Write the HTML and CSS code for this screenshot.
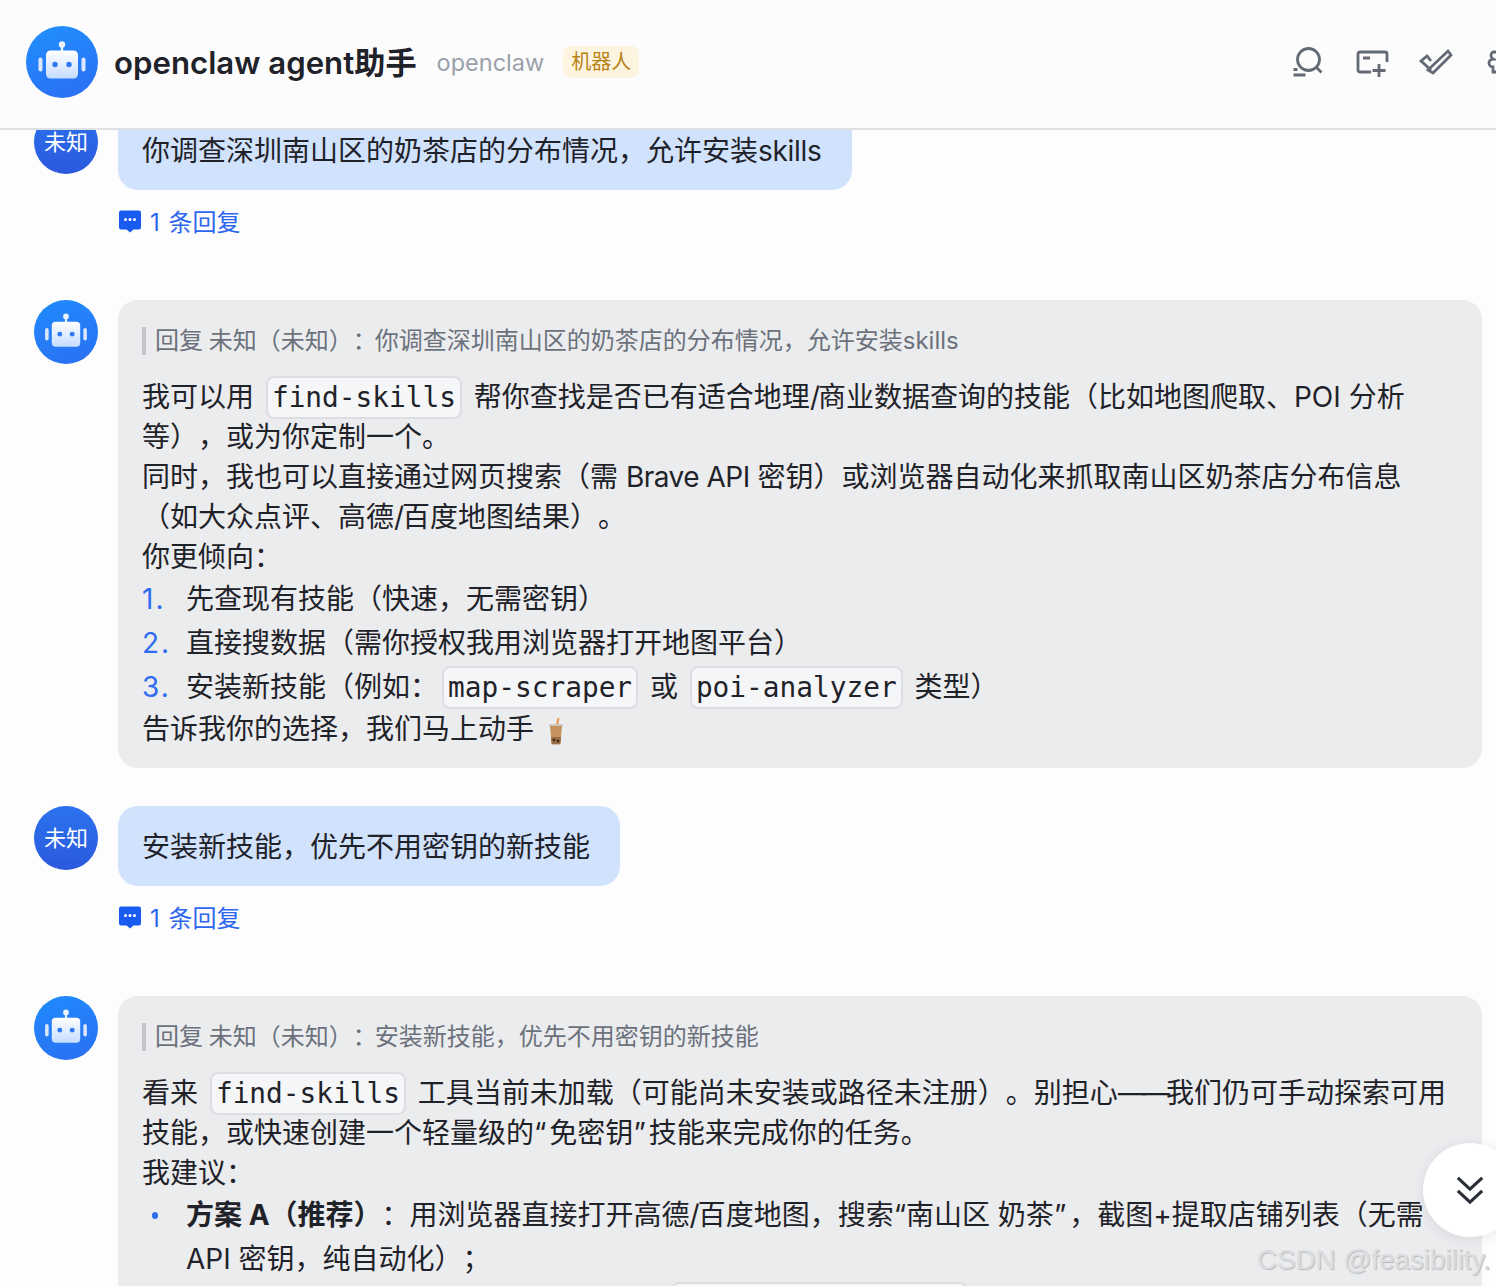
FILE: index.html
```html
<!DOCTYPE html>
<html lang="zh-CN">
<head>
<meta charset="utf-8">
<title>openclaw agent助手</title>
<link rel="stylesheet" href="styles.css">
</head>
<body>
<svg class="defs" width="0" height="0" aria-hidden="true">
  <defs>
    <linearGradient id="face" x1="0" y1="0" x2="0" y2="1"><stop offset="0" stop-color="#ffffff"/><stop offset="1" stop-color="#c5dcff"/></linearGradient>
    <symbol id="robot" viewBox="0 0 72 72">
      <circle cx="36" cy="18.500" r="3.200" fill="#eaf2ff"/>
      <rect x="34.800" y="19" width="2.400" height="6" fill="#eaf2ff"/>
      <rect x="20" y="24.500" width="32" height="28" rx="4.500" fill="url(#face)"/>
      <rect x="12.500" y="31.500" width="4" height="14" rx="2" fill="#dbe8ff"/>
      <rect x="55.500" y="31.500" width="4" height="14" rx="2" fill="#dbe8ff"/>
      <circle cx="29" cy="38.500" r="2.700" fill="#2f78f5"/>
      <circle cx="43" cy="38.500" r="2.700" fill="#2f78f5"/>
    </symbol>
    <symbol id="thread" viewBox="0 0 24 24">
      <path d="M3 1.500h18a2 2 0 0 1 2 2v15a2 2 0 0 1-2 2h-5.500L12 23.500 8.500 20.500H3a2 2 0 0 1-2-2v-15a2 2 0 0 1 2-2z" fill="#1a5cf0"/>
      <circle cx="7.500" cy="10.500" r="1.500" fill="#fff"/><circle cx="12" cy="10.500" r="1.500" fill="#fff"/><circle cx="16.500" cy="10.500" r="1.500" fill="#fff"/>
    </symbol>
  </defs>
</svg>

<header class="topbar">
  <div class="identity">
    <svg class="avatar-lg"><use href="#robot"/></svg>
    <h1 class="title">openclaw agent助手</h1>
    <span class="handle">openclaw</span>
    <span class="tag">机器人</span>
  </div>
  <div class="actions">
    <svg class="action" viewBox="0 0 36 36"><circle cx="19.500" cy="15.500" r="11"/><path d="M27.500 23.500l5 5M4.500 31h12M4.500 25.500h4"/></svg>
    <svg class="action" viewBox="0 0 36 36"><path d="M18 28H7a2 2 0 0 1-2-2V10a2 2 0 0 1 2-2h25a2 2 0 0 1 2 2v8M10 14h7M26 20v13M19.500 26.500h13"/></svg>
    <svg class="action" viewBox="0 0 36 36"><path d="M14 17l-4-5-6 5 10 9M11 26L31 7l3 4-18 18z"/></svg>
    <svg class="action" viewBox="0 0 36 36"><path d="M12 8h6a4 4 0 0 1 8 0h4v20H12v-5a4 4 0 0 1 0-8 4 4 0 0 1 0-7z"/></svg>
  </div>
</header>

<main class="feed">
  <article class="msg">
    <div class="avatar user">未知</div>
    <div class="col">
      <div class="bubble mine">你调查深圳南山区的奶茶店的分布情况，允许安装<span class="latin">skills</span></div>
      <a class="replies"><svg class="thread-ico"><use href="#thread"/></svg>1 条回复</a>
    </div>
  </article>

  <article class="msg">
    <svg class="avatar"><use href="#robot"/></svg>
    <div class="col wide">
      <div class="bubble bot">
        <div class="quote"><span class="who">回复 未知（未知）：</span>你调查深圳南山区的奶茶店的分布情况，允许安装skills</div>
        <p>我可以用 <code>find-skills</code> 帮你查找是否已有适合地理<span class="slash">/</span>商业数据查询的技能（比如地图爬取、POI 分析等），或为你定制一个。<br>同时，我也可以直接通过网页搜索（需 <span class="latin">Brave API</span> 密钥）或浏览器自动化来抓取南山区奶茶店分布信息（如大众点评、高德<span class="slash">/</span>百度地图结果）。<br>你更倾向：</p>
        <ol>
          <li>先查现有技能（快速，无需密钥）</li>
          <li>直接搜数据（需你授权我用浏览器打开地图平台）</li>
          <li>安装新技能（例如：<code>map-scraper</code> 或 <code>poi-analyzer</code> 类型）</li>
        </ol>
        <p>告诉我你的选择，我们马上动手 <svg class="boba" viewBox="0 0 16 28"><path d="M9 8l1.500-7" stroke="#e9974f" stroke-width="2" fill="none"/><path d="M1 8.500h14" stroke="#c9c3bb" stroke-width="2.500"/><path d="M2 9h12l-1.500 17a1.500 1.500 0 0 1-1.500 1.300H5A1.500 1.500 0 0 1 3.500 26z" fill="#c4925c"/><path d="M3 20h10l-.6 6.500a1 1 0 0 1-1 .8H4.600a1 1 0 0 1-1-.8z" fill="#9a6e45"/><circle cx="6" cy="23" r="1.300" fill="#3a2a1e"/><circle cx="10" cy="24" r="1.300" fill="#3a2a1e"/></svg></p>
      </div>
    </div>
  </article>

  <article class="msg">
    <div class="avatar user">未知</div>
    <div class="col">
      <div class="bubble mine">安装新技能，优先不用密钥的新技能</div>
      <a class="replies"><svg class="thread-ico"><use href="#thread"/></svg>1 条回复</a>
    </div>
  </article>

  <article class="msg">
    <svg class="avatar"><use href="#robot"/></svg>
    <div class="col wide">
      <div class="bubble bot">
        <div class="quote"><span class="who">回复 未知（未知）：</span>安装新技能，优先不用密钥的新技能</div>
        <p>看来 <code>find-skills</code> 工具当前未加载（可能尚未安装或路径未注册）。别担心<span class="dash">——</span>我们仍可手动探索可用技能，或快速创建一个轻量级的<span class="mark">“</span>免密钥<span class="mark">”</span>技能来完成你的任务。<br>我建议：</p>
        <ul>
          <li><strong>方案 A（推荐）</strong>：用浏览器直接打开高德<span class="slash">/</span>百度地图，搜索“南山区 奶茶<span class="mark">”</span>，截图+提取店铺列表（无需 API 密钥，纯自动化）；</li>
          <li><strong>方案 B</strong>：创建一个轻量级的本地技能包 <code>amap-poi-explorer</code></li>
        </ul>
      </div>
    </div>
  </article>
</main>

<button class="to-bottom" aria-label="回到底部">
  <svg viewBox="0 0 32 32"><path d="M3 3l13 12L29 3M3 17l13 12 13-12"/></svg>
</button>
<div class="watermark">CSDN @feasibility.</div>
</body>
</html>
```
FILE: styles.css
```css
* { box-sizing: border-box; }
html, body { margin: 0; height: 100%; }
body {
  position: relative;
  height: 1286px;
  overflow: hidden;
  background: #fdfdfe;
  color: #1f2329;
  font-family: Inter, "Noto Sans CJK SC", sans-serif;
  text-spacing-trim: space-all;
  display: flex;
  flex-direction: column;
}
.defs { position: absolute; }

.topbar {
  flex: none;
  height: 130px;
  padding: 0 0 4px 26px;
  display: flex;
  align-items: center;
  background: #fcfcfd;
  border-bottom: 2px solid #dfe0e2;
  position: relative;
  z-index: 2;
  overflow: hidden;
}
.identity { flex: 1; display: flex; align-items: center; min-width: 0; }
.avatar-lg {
  width: 72px; height: 72px; border-radius: 50%;
  background: linear-gradient(160deg, #2090ff, #2b6df2);
  margin-right: 16px;
}
.title { margin: 2px 20px 0 0; font-size: 31.2px; line-height: 44px; font-weight: 600; color: #1f2329; }
.handle { font-size: 23.5px; color: #9aa0aa; margin-right: 19px; }
.tag {
  height: 32px; padding: 0 8px; line-height: 32px; border-radius: 8px;
  background: #fdf4df; color: #b78314; font-size: 20px;
}
.actions { flex: none; display: flex; gap: 28px; margin-right: -21px; margin-top: 0; }
.action {
  width: 36px; height: 36px; fill: none; stroke: #636a75; stroke-width: 2.800;
}

.feed {
  flex: 1;
  min-height: 0;
  margin-top: -20px;
  padding: 0 14px 0 34px;
  display: flex;
  flex-direction: column;
  gap: 38px;
}
.msg { display: flex; gap: 20px; align-items: flex-start; flex: none; }
.avatar {
  flex: none; width: 64px; height: 64px; border-radius: 50%;
  background: linear-gradient(160deg, #1f8bff, #2b6ff0);
}
.user {
  background: linear-gradient(180deg, #2a72ee, #2b59dd);
  color: #fff; font-size: 22px; padding-bottom: 4px;
  display: flex; align-items: center; justify-content: center;
}
.col { display: flex; flex-direction: column; align-items: flex-start; min-width: 0; }
.wide { flex: 1; }
.bubble { border-radius: 20px; padding: 20px 24px; font-size: 28px; line-height: 40px; }
.mine { background: #d1e2fd; padding: 21px 30px 19px 24px; }
.bot { background: #ebecee; width: 100%; padding: 20px 26px 19px 24px; }
.latin { letter-spacing: -.5px; }
.mine .latin { letter-spacing: -.3px; }
.slash { letter-spacing: -2px; }
.dash { letter-spacing: -4px; }
.mark { letter-spacing: 3px; }

.quote {
  margin: 7px 0 22px;
  padding-left: 9px;
  border-left: 4px solid #c5c7cb;
  font-size: 24px; line-height: 28px; color: #6c727c;
  word-spacing: -1px;
}
.who { margin-right: -2px; }
p { margin: 0; }
code {
  font-family: "DejaVu Sans Mono", monospace;
  font-size: 27.8px;
  line-height: 1;
  margin: 0 4px;
  padding: 3px 4px;
  background: #f5f6f8;
  border: 2px solid #dcdee1;
  border-radius: 8px;
}
ol, ul { margin: 0; padding: 0; list-style: none; }
li { position: relative; padding-left: 44px; line-height: 44px; }
ol { counter-reset: n; }
ol li { counter-increment: n; }
ol li::before { content: counter(n) "."; position: absolute; left: 0; color: #2f6cf0; letter-spacing: 2px; }
ul li::before {
  content: ""; position: absolute; left: 10px; top: 19px; width: 6px; height: 7px;
  border-radius: 50%; background: #2f6cf0;
}
strong { font-weight: 700; }
.boba { width: 16px; height: 28px; vertical-align: -6px; margin-left: 6px; }

.replies {
  display: flex; align-items: center; gap: 8px;
  margin: 14px 0 26px;
  height: 32px; font-size: 24px; word-spacing: 2px; color: #2d66ee;
}
.thread-ico { width: 24px; height: 24px; margin-top: 2px; }

.to-bottom {
  position: absolute; left: 1423px; top: 1143px;
  width: 94px; height: 94px; padding: 0 0 0 32px; border: 0; border-radius: 50%;
  background: #fff; box-shadow: 0 2px 12px rgba(30, 40, 60, .10);
  display: flex; align-items: center;
  z-index: 3;
}
.to-bottom svg { width: 30px; height: 30px; fill: none; stroke: #2b3038; stroke-width: 3.4; }
.watermark {
  position: absolute; left: 1257px; top: 1243px; white-space: nowrap; z-index: 4;
  font-family: "Liberation Sans", sans-serif; font-size: 27.7px; line-height: 34px;
  color: #dcdde0; text-shadow: 1px 1px 1px #b8babd;
}
```
